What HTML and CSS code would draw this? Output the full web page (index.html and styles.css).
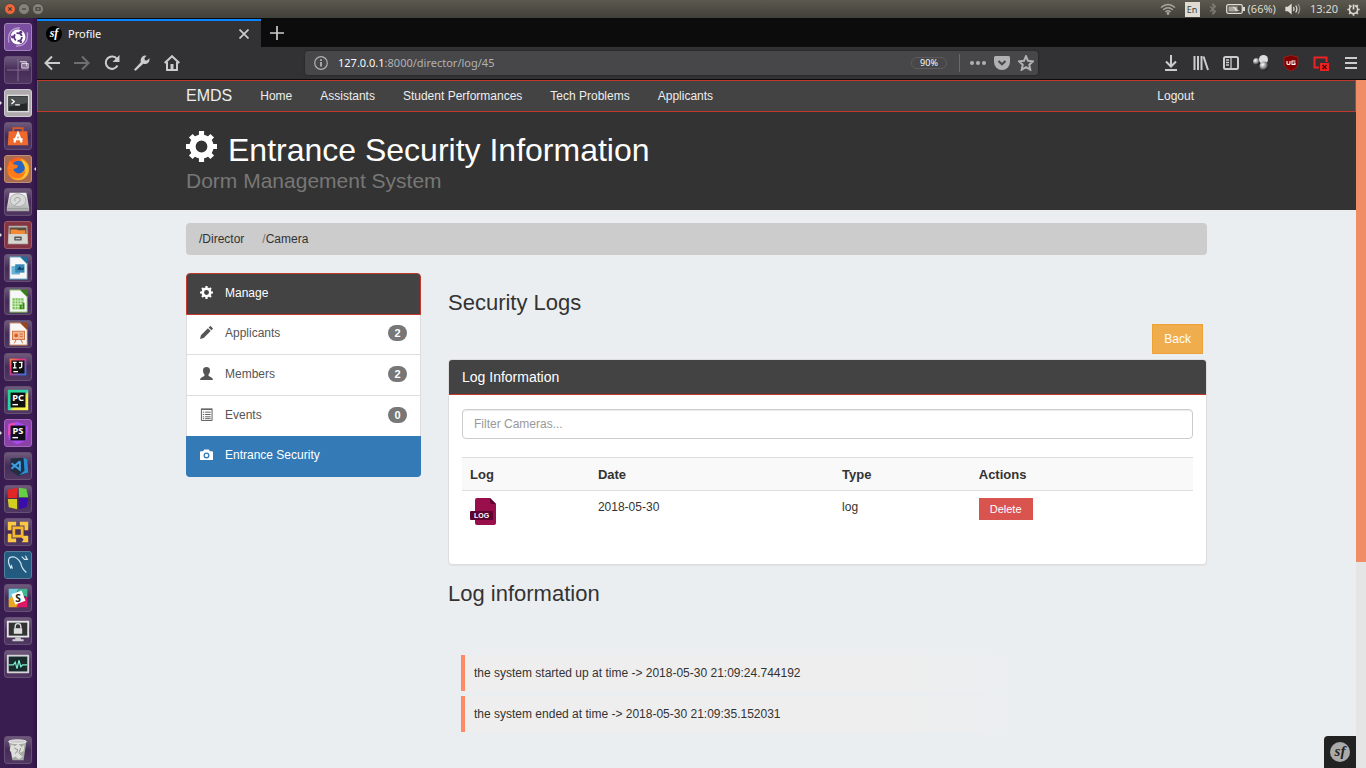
FILE: index.html
```html
<!DOCTYPE html>
<html lang="en">
<head>
<meta charset="utf-8">
<meta name="viewport" content="width=device-width, initial-scale=1">
<title>Profile</title>
<link rel="stylesheet" href="styles.css">
</head>
<body>
<svg class="defs" aria-hidden="true">
  <defs>
    <linearGradient id="steel" x1="0" y1="0" x2="0" y2="1"><stop offset="0" stop-color="#f4f4f4"/><stop offset="1" stop-color="#a9a9a9"/></linearGradient>
    <linearGradient id="fox" x1="0" y1="0" x2="1" y2="1"><stop offset="0" stop-color="#ff3d1f"/><stop offset=".5" stop-color="#ff8a16"/><stop offset="1" stop-color="#ffd43a"/></linearGradient>
    <linearGradient id="rainbow" x1="0" y1="0" x2="1" y2="1"><stop offset="0" stop-color="#fc8a3a"/><stop offset=".35" stop-color="#f0317a"/><stop offset="1" stop-color="#1a7df0"/></linearGradient>
    <linearGradient id="pycharm" x1="0" y1="0" x2="1" y2="1"><stop offset="0" stop-color="#21d789"/><stop offset=".5" stop-color="#2fd3b0"/><stop offset=".6" stop-color="#f5ec4b"/><stop offset="1" stop-color="#fcf84a"/></linearGradient>
    <radialGradient id="ball" cx=".35" cy=".35" r=".7"><stop offset="0" stop-color="#fff"/><stop offset=".5" stop-color="#999"/><stop offset="1" stop-color="#111"/></radialGradient>
    <symbol id="gear" viewBox="0 0 30 30">
      <circle cx="15" cy="15" r="8.700" fill="none" stroke="currentColor" stroke-width="6"/>
      <path fill="none" stroke="currentColor" stroke-width="5" d="M15 0v5M15 25v5M0 15h5M25 15h5M4.600 4.600l3.500 3.500M21.900 21.900l3.500 3.500M25.400 4.600l-3.500 3.500M8.100 21.900l-3.500 3.500"/>
    </symbol>
  </defs>
</svg>

<header class="menubar">
  <div class="window-buttons">
    <button class="win close" aria-label="Close window"><svg viewBox="0 0 12 12"><path d="M4 4l4 4M8 4l-4 4"/></svg></button>
    <button class="win" aria-label="Minimise"><svg viewBox="0 0 12 12"><path d="M3.500 6h5"/></svg></button>
    <button class="win" aria-label="Maximise"><svg viewBox="0 0 12 12"><path d="M3.500 4.500h5v3h-5z"/></svg></button>
  </div>
  <div class="indicators">
    <svg width="16" height="12" viewBox="0 0 16 12" fill="none" stroke="#aaa89f" stroke-width="1.400"><path d="M1 4.500Q8-1.500 15 4.500M3.200 6.800Q8 2.600 12.800 6.800M5.400 9Q8 6.600 10.600 9"/><circle cx="8" cy="10.500" r=".7"/></svg>
    <span class="keyboard">En</span>
    <svg width="8" height="12" viewBox="0 0 8 12" fill="none" stroke="#7e7c73" stroke-width="1.200"><path d="M1 3.500l5.500 5L4 11V1l2.500 2.500L1 8.500"/></svg>
    <span class="battery">
      <svg width="19" height="10" viewBox="0 0 19 10"><rect x=".7" y=".7" width="15.600" height="8.600" rx="1.500" fill="none" stroke="#dfdbd2" stroke-width="1.300"/><rect x="2.500" y="2.500" width="9" height="5" fill="#aaa89f"/><rect x="17" y="3" width="2" height="4" fill="#dfdbd2"/><path d="M6 2.500l4 1.500-.5 1L14 7 9 6.300l.5-1z" fill="#fff"/></svg>
      (66%)
    </span>
    <svg width="16" height="12" viewBox="0 0 16 12" fill="none" stroke="#dfdbd2" stroke-width="1.300"><path fill="#dfdbd2" d="M1 4.500h2l3-2.500v8L3 7.500H1z"/><path d="M8.500 4q1.200 2 0 4M10.700 2.500q2.400 3.500 0 7"/><path stroke="#96948b" d="M13 1q3.400 5 0 10"/></svg>
    <span>13:20</span>
    <svg width="13" height="13" viewBox="0 0 14 14" fill="none" stroke="#dfdbd2"><circle cx="7" cy="7" r="4.400" stroke-width="1.700" stroke-dasharray="23.600 4" transform="rotate(-72 7 7)"/><path stroke-width="1.800" d="M7 1.500V7M.3 7h1.700M12 7h1.700M7 12v1.700M2.300 2.300l1.300 1.300M11.700 2.300l-1.300 1.300M2.300 11.700l1.300-1.300M11.700 11.700l-1.300-1.300"/></svg>
  </div>
</header>

<div class="desktop">
  <nav class="launcher" aria-label="Launcher">
    <button class="tile t-dash" aria-label="Dash"><svg viewBox="0 0 28 28"><path d="M4 20Q2 5 16 4M24 9q2 14-12 15" fill="none" stroke="#b898d2" stroke-width="1.500"/><circle cx="14" cy="14" r="8" fill="#fff"/><circle cx="14" cy="14" r="4.200" fill="none" stroke="#5a3380" stroke-width="2" stroke-dasharray="7 1.800"/><g fill="#5a3380"><circle cx="8" cy="14" r="1.500"/><circle cx="17" cy="8.800" r="1.500"/><circle cx="17" cy="19.200" r="1.500"/></g></svg></button>
    <button class="tile" aria-label="Workspaces"><svg viewBox="0 0 28 28"><path d="M14 2v24M2 14h24" stroke="#8b7494"/><path d="M16 5h7v5M18 7h7v5h-7z" fill="#8b7494" stroke="#ded5e2"/></svg></button>
    <button class="tile t-light running" aria-label="Terminal"><svg viewBox="0 0 28 28"><rect x="2" y="5" width="24" height="19" fill="#ddd"/><rect x="3.500" y="6.500" width="21" height="16" fill="#242828"/><path d="M4 7h20v7L4 18z" fill="#4b4f4f"/><path d="M7 10l3 2.500L7 15M11 16h5" fill="none" stroke="#fff" stroke-width="1.400"/></svg></button>
    <button class="tile" aria-label="Software"><svg viewBox="0 0 28 28"><path d="M9 9V5.500h10V9" fill="none" stroke="#d95d22" stroke-width="2"/><path d="M4 9h20l1 15H3z" fill="#f0692c"/><path d="M10 21l4-10 4 10M9 17.500h10" fill="none" stroke="#fff" stroke-width="2.200"/></svg></button>
    <button class="tile t-fox running active" aria-label="Firefox"><svg viewBox="0 0 28 28"><circle cx="14" cy="14" r="12" fill="url(#fox)"/><circle cx="14.500" cy="12" r="7" fill="#2766c4"/><path d="M5 5l4 4 5 1-1 3-4 1q2 6 8 5 5-1 5-7 3 10-7 12Q4 24 3 13z" fill="#ff7a1c"/><path d="M17 3q9 4 8 13-2 7-8 8 7-5 4-13z" fill="#ffc52e"/></svg></button>
    <button class="tile" aria-label="Disk"><svg viewBox="0 0 28 28"><path d="M5 4h18l3 16v4H2v-4z" fill="url(#steel)"/><ellipse cx="14" cy="12" rx="8.500" ry="7" fill="#d9d9d9" stroke="#aaa"/><path d="M11 13a3 2.500 0 1 1 5 0l-6 5M3 21h22" fill="none" stroke="#999"/></svg></button>
    <button class="tile t-files running" aria-label="Files"><svg viewBox="0 0 28 28"><path d="M4 4h20l1 20H3z" fill="#b3b1ac"/><path d="M5 6h18v7H5z" fill="#5a4a40"/><path d="M6 8h7l1 1h8v4H6z" fill="#f58a34"/><path d="M4 13h20v10H4z" fill="#d8d6d1"/><rect x="10" y="15.500" width="8" height="4.500" rx="1" fill="#555"/><path d="M11.500 18h5" stroke="#eee"/></svg></button>
    <button class="tile" aria-label="Writer"><svg viewBox="0 0 28 28"><path d="M5 2h12l7 7v17H5z" fill="#f7f7f7" stroke="#3b87b0"/><path d="M16 2h8v8z" fill="#1e6f9c"/><path d="M7 12h9v9H7z" fill="#69b2d6"/><path d="M11 10h10v9H11z" fill="#3388b8"/><path d="M13 16l3-4 2 3 2-2v3z" fill="#0c3f5c"/></svg></button>
    <button class="tile" aria-label="Calc"><svg viewBox="0 0 28 28"><path d="M5 2h12l7 7v17H5z" fill="#f7f7f7" stroke="#5aa33a"/><path d="M16 2h8v8z" fill="#39801b"/><path d="M8 11h12v12H8z" fill="#7cc35a"/><path d="M8 14h12M8 17h12M8 20h12M11 11v12M14 11v12M17 11v12" stroke="#e5f5dd" stroke-width=".8"/><path d="M16 18h2v5h-2zM19 16h2v7h-2z" fill="#378b12"/></svg></button>
    <button class="tile" aria-label="Impress"><svg viewBox="0 0 28 28"><path d="M5 2h12l7 7v17H5z" fill="#f7f7f7" stroke="#b8663a"/><path d="M16 2h8v8z" fill="#97471b"/><rect x="8" y="11" width="13" height="9" fill="#f3b593" stroke="#d16f3a"/><circle cx="12" cy="15.500" r="2" fill="#cf6127"/><path d="M16 14h3M16 16.500h3M12 20l-2 4M17 20l2 4" stroke="#cf6127"/></svg></button>
    <button class="tile" aria-label="IntelliJ IDEA"><svg viewBox="0 0 28 28"><rect x="5" y="5" width="18" height="18" fill="url(#rainbow)"/><rect x="7" y="7" width="14" height="14" fill="#101010"/><path d="M8.500 9h4M10.500 9v6M8.500 15h4M15 9h4M18 9v4.500q0 1.500-3 1.500M9 19h5" fill="none" stroke="#fff" stroke-width="1.400"/></svg></button>
    <button class="tile" aria-label="PyCharm"><svg viewBox="0 0 28 28"><rect x="3" y="3" width="22" height="22" fill="url(#pycharm)"/><rect x="6" y="6" width="16" height="16" fill="#101010"/><text x="14" y="15" class="tile-text">PC</text><path d="M8 19h6" stroke="#fff" stroke-width="1.500"/></svg></button>
    <button class="tile t-storm running" aria-label="PhpStorm"><svg viewBox="0 0 28 28"><path d="M3 5l10-3 12 5-2 15-10 4-9-5z" fill="#a94cf0"/><path d="M4 4l7-1-3 11-5 3z" fill="#f04ab4"/><rect x="6" y="6" width="16" height="16" fill="#120d1c"/><text x="14" y="15" class="tile-text">PS</text><path d="M8 19h6" stroke="#fff" stroke-width="1.500"/></svg></button>
    <button class="tile" aria-label="Code"><svg viewBox="0 0 28 28"><path d="M6 6l13-1 5 3 1 13-10 4-9-6z" fill="#222f42"/><path d="M20 5l4 2 1 14-10 3 6-5z" fill="#298fd5"/><path d="M16 9v9l-9-7M16 9l-9 8" fill="none" stroke="#3aa0e8" stroke-width="2.200"/></svg></button>
    <button class="tile" aria-label="Puzzle"><svg viewBox="0 0 28 28"><path d="M3 4l10-2v11H3z" fill="#df2727"/><path d="M15 2l8 1 2 9H15z" fill="#65cf43"/><path d="M3 14h10v11l-9-2z" fill="#d3cf20"/><path d="M15 13h10l-2 10-8 2z" fill="#3a0cae"/></svg></button>
    <button class="tile" aria-label="VMware"><svg viewBox="0 0 28 28"><path d="M3 3h9v4H7v5H3zM16 3h9v9h-4V7h-5zM3 16h4v5h5v4H3zM18 18h7v7h-7l2-3-3-3z" fill="#f9c944"/><rect x="9.500" y="9.500" width="9" height="9" fill="#4a3354" stroke="#f4b72d" stroke-width="3"/></svg></button>
    <button class="tile t-mysql" aria-label="MySQL Workbench"><svg viewBox="0 0 28 28"><path d="M8 18l-1-3-1 2Q2 9 5 6q7-3 12 6 1 6 6 10M18 5l3 3 3 0-2-4" fill="none" stroke="#cfe5ef" stroke-width="1.300"/></svg></button>
    <button class="tile" aria-label="Slack"><svg viewBox="0 0 28 28"><path d="M4 4h11l-6 9-5 3z" fill="#70cadb"/><path d="M15 4h9v9l-11-4z" fill="#3eb991"/><path d="M4 15l6-4 5 13H4z" fill="#e9a820"/><path d="M24 12v12H12l3-5z" fill="#e01765"/><path d="M7 10l11-4 4 11-11 4z" fill="#fff"/><text x="14" y="18" class="tile-text dark">S</text></svg></button>
    <button class="tile" aria-label="Lock screen"><svg viewBox="0 0 28 28"><rect x="2" y="3" width="24" height="18" fill="#e6e6e6"/><rect x="4" y="5" width="20" height="14" fill="#333"/><path d="M11 11V9a3 3 0 0 1 6 0v2" fill="none" stroke="#ddd" stroke-width="1.500"/><rect x="9.500" y="11" width="9" height="6" fill="#ddd"/><path d="M11 21h6v2h3v2H8v-2h3z" fill="#ccc"/></svg></button>
    <button class="tile" aria-label="System monitor"><svg viewBox="0 0 28 28"><rect x="2" y="4" width="24" height="20" rx="1" fill="#d5d5d5"/><rect x="4" y="6" width="20" height="16" fill="#182b2c"/><path d="M4 15h5l2-3 2 7 2-9 2 7 2-2h5" fill="none" stroke="#7df0cf" stroke-width="1.300"/></svg></button>
    <button class="tile trash" aria-label="Trash"><svg viewBox="0 0 28 28"><path d="M4 5h19l-3 20H8z" fill="#a7aaa4"/><path d="M7 8l4 2 3-3 4 4 3-3-1 7-4 2 3 4-4 3-4-3-3 2-1-6-2-3z" fill="#dedfda"/><path d="M10 12l4 2-3 4M17 12l-2 5 3 3" fill="none" stroke="#888" /><ellipse cx="13.500" cy="5" rx="9.500" ry="2" fill="#ccc" stroke="#eee"/></svg></button>
  </nav>

  <div class="browser">
    <div class="tabs">
      <div class="tab">
        <svg class="sf" width="16" height="16" viewBox="0 0 20 20"><circle cx="10" cy="10" r="10" fill="#000"/><text x="10" y="14" fill="#fff">sf</text></svg>
        <span>Profile</span>
        <button class="plain tab-close" aria-label="Close tab"><svg width="10" height="10" viewBox="0 0 10 10"><path d="M.5.5l9 9M9.500.5l-9 9"/></svg></button>
      </div>
      <button class="plain new-tab" aria-label="New tab"><svg width="14" height="14" viewBox="0 0 14 14"><path d="M7 0v14M0 7h14"/></svg></button>
    </div>
    <div class="toolbar">
      <div class="tools">
        <button class="plain" aria-label="Back"><svg viewBox="0 0 16 16"><path d="M16 8H1M8 1.500L1.500 8 8 14.500"/></svg></button>
        <button class="plain dim" aria-label="Forward"><svg viewBox="0 0 16 16"><path d="M0 8h15M8 1.500L14.500 8 8 14.500"/></svg></button>
        <button class="plain" aria-label="Reload"><svg viewBox="0 0 16 16"><path d="M13.500 10.500A6.200 6.200 0 1 1 13 4"/><path d="M15.500 0v7h-7z" fill="#ccc" stroke="none"/></svg></button>
        <button class="plain" aria-label="Developer tools"><svg viewBox="0 0 16 16"><path fill="#ccc" stroke="none" d="M0 14.500L6.800 7.200Q6 3.500 8.500 1.500 10.500 0 12.500.8L10.500 3l.3 2.200 2.200.3 2.300-2.200q.8 2.500-1 4.400-2 1.800-5 1L2 15.500q-1.200.6-2-1z"/></svg></button>
        <button class="plain" aria-label="Home"><svg viewBox="0 0 16 16"><path d="M.7 8L8 1.200 15.300 8M3 7v8h10V7"/><path d="M6.500 9h3v6h-3z" fill="#ccc" stroke="none"/></svg></button>
      </div>
      <div class="address">
        <svg width="14" height="14" viewBox="0 0 14 14" fill="none" stroke="#b1b1b3"><circle cx="7" cy="7" r="6.300" stroke-width="1.200"/><path stroke-width="1.800" d="M7 6v4.500M7 3.200V5"/></svg>
        <span class="url"><b>127.0.0.1</b>:8000/director/log/45</span>
        <button class="plain zoom">90%</button>
        <span class="rule"></span>
        <button class="plain" aria-label="Page actions"><svg viewBox="0 0 16 16"><g fill="#b1b1b3" stroke="none"><circle cx="2" cy="8" r="2"/><circle cx="8" cy="8" r="2"/><circle cx="14" cy="8" r="2"/></g></svg></button>
        <button class="plain" aria-label="Pocket"><svg viewBox="0 0 16 16"><path d="M1.500 1h13Q16 1 16 2.500V7a8 8 0 0 1-16 0V2.500Q0 1 1.500 1z" fill="#b1b1b3" stroke="none"/><path d="M4.500 6L8 9.300 11.500 6" stroke="#474749"/></svg></button>
        <button class="plain" aria-label="Bookmark"><svg viewBox="0 0 16 16"><path d="M8 1.200l2 4.600 5 .5-3.700 3.400 1 5L8 12.200l-4.300 2.500 1-5L1 6.300l5-.5z"/></svg></button>
      </div>
      <div class="tools">
        <button class="plain" aria-label="Downloads"><svg viewBox="0 0 16 16"><path d="M8 0v11M3 6.500L8 11.500l5-5M2 15h12"/></svg></button>
        <button class="plain" aria-label="Library"><svg viewBox="0 0 16 16"><path d="M1.500 1v14M5 1v14M8.500 1v14M10.500 1.500L15 15"/></svg></button>
        <button class="plain" aria-label="Sidebars"><svg viewBox="0 0 16 16"><rect x="1" y="2" width="14" height="12" rx="1.500"/><path d="M8 2v12M3 5h3M3 7.500h3M3 10h3" stroke-width="1.300"/></svg></button>
        <button class="plain" aria-label="Extension"><svg viewBox="0 0 16 16"><g stroke="none" fill="url(#ball)"><circle cx="3.500" cy="6.500" r="3.500"/><circle cx="10.500" cy="4.500" r="4.500" fill="#ddd"/><circle cx="11" cy="11" r="4.500"/></g></svg></button>
        <button class="plain" aria-label="uBlock Origin"><svg viewBox="0 0 16 16"><path d="M8 0q3 2 7 2v6q0 5-7 8-7-3-7-8V2q4 0 7-2z" fill="#800000" stroke="#a52626" stroke-width=".7"/><path d="M4 6v2.500q0 1 1.500 1T7 8.500V6M12.500 6H9v3.500h3V8h-1.500" stroke="#fff" stroke-width="1.100"/></svg></button>
        <button class="plain" aria-label="Window closer"><svg viewBox="0 0 16 16"><path d="M6 12.500H1.500v-10h12V7" stroke="#ee2222"/><path d="M7 8h9v8H7z" fill="#ee2222" stroke="none"/><path d="M9.500 10l4 4M13.500 10l-4 4" stroke="#500" stroke-width="1.500"/></svg></button>
        <button class="plain" aria-label="Menu"><svg viewBox="0 0 16 16"><path d="M2 3h12M2 8h12M2 13h12"/></svg></button>
      </div>
    </div>

    <div class="viewport">
      <div class="page">
        <nav class="navbar">
          <div class="container nav-row">
            <a class="brand" href="#">EMDS</a>
            <a href="#">Home</a>
            <a href="#">Assistants</a>
            <a href="#">Student Performances</a>
            <a href="#">Tech Problems</a>
            <a href="#">Applicants</a>
            <a class="logout" href="#">Logout</a>
          </div>
        </nav>
        <header class="hero">
          <div class="container">
            <h1><svg class="hero-gear"><use href="#gear"/></svg> Entrance Security Information</h1>
            <p>Dorm Management System</p>
          </div>
        </header>
        <div class="container">
          <nav class="breadcrumb" aria-label="Breadcrumb">
            <a href="#">/Director</a>
            <span><i>/</i><a href="#">Camera</a></span>
          </nav>
          <div class="columns">
            <nav class="side" aria-label="Manage">
              <a class="head" href="#"><svg viewBox="0 0 30 30"><use href="#gear"/></svg>Manage</a>
              <a href="#"><svg viewBox="0 0 14 14"><path fill="currentColor" d="M0 14l1-4L8.500 2.500l3 3L4 13zM9.300 1.700l1.400-1.400q.5-.5 1 0l2 2q.5.5 0 1l-1.400 1.400z"/></svg>Applicants<span class="badge">2</span></a>
              <a href="#"><svg viewBox="0 0 14 14"><path fill="currentColor" d="M7 0q3.800 0 3.800 3.800 0 3-1.600 4.200v1.400q0 .6 2.300 1.300Q14 11.500 14 14H0q0-2.500 2.500-3.300 2.300-.7 2.300-1.300V8Q3.200 6.800 3.200 3.800 3.200 0 7 0z"/></svg>Members<span class="badge">2</span></a>
              <a href="#"><svg viewBox="0 0 14 14"><path fill="none" stroke="currentColor" d="M1.500 1.500h11.500v12H1.500zM1 1h12.500M3 4.500h1.500M3 7h1.500M3 9.500h1.500M3 11.500h1.500M5.500 4.500h6M5.500 7h6M5.500 9.500h6M5.500 11.500h6"/></svg>Events<span class="badge">0</span></a>
              <a class="current" href="#"><svg viewBox="0 0 14 14"><path fill="currentColor" fill-rule="evenodd" d="M4.500 1.500h5l1.200 2H13q1 0 1 1V12q0 1-1 1H1q-1 0-1-1V4.500q0-1 1-1h2.300zM7 4.800a3.200 3.200 0 1 0 0 6.400 3.200 3.200 0 1 0 0-6.400zM7 6.200a1.800 1.800 0 1 1 0 3.600 1.800 1.800 0 1 1 0-3.600z"/></svg>Entrance Security</a>
            </nav>
            <main>
              <h3>Security Logs</h3>
              <div class="actions"><button class="btn warning">Back</button></div>
              <section class="panel">
                <h4>Log Information</h4>
                <div class="panel-body">
                  <input type="text" aria-label="Filter Cameras" placeholder="Filter Cameras...">
                  <table>
                    <thead><tr><th class="c-log">Log</th><th class="c-date">Date</th><th class="c-type">Type</th><th>Actions</th></tr></thead>
                    <tbody><tr>
                      <td><svg class="log-icon" width="26" height="27" viewBox="0 0 26 27"><path d="M7 0h13l6 6v19q0 2-2 2H7q-2 0-2-2V2q0-2 2-2z" fill="#990f4b"/><path d="M20 0l6 6h-4q-2 0-2-2z" fill="#5e0330"/><rect y="13" width="23" height="9" rx="1" fill="#5e0330"/><text x="11.500" y="20">LOG</text></svg></td>
                      <td>2018-05-30</td>
                      <td>log</td>
                      <td><button class="btn danger">Delete</button></td>
                    </tr></tbody>
                  </table>
                </div>
              </section>
              <h3 class="second">Log information</h3>
              <ul class="log">
                <li>the system started up at time -&gt; 2018-05-30 21:09:24.744192</li>
                <li>the system ended at time -&gt; 2018-05-30 21:09:35.152031</li>
              </ul>
            </main>
          </div>
        </div>
        <button class="plain debug" aria-label="Symfony toolbar"><svg class="sf" width="20" height="20" viewBox="0 0 20 20"><circle cx="10" cy="10" r="10" fill="#aaa"/><text x="10" y="14" fill="#222">sf</text></svg></button>
      </div>
      <div class="scrollbar"><div class="thumb"></div></div>
    </div>
  </div>
</div>
</body>
</html>
```

FILE: styles.css
```css
* { box-sizing: border-box; }
body {
  margin: 0;
  height: 100vh;
  display: flex;
  flex-direction: column;
  overflow: hidden;
  font: 12px/18px "Liberation Sans", Arial, sans-serif;
  color: #333;
}
a { color: inherit; text-decoration: none; }
svg { display: block; flex: none; }
.defs { position: absolute; width: 0; height: 0; }
button { font: inherit; cursor: pointer; }
.plain { border: 0; background: none; padding: 0; color: inherit; display: block; }

/* System bar */
.menubar {
  height: 18px;
  flex: none;
  display: flex;
  align-items: center;
  justify-content: space-between;
  padding: 0 6px 0 4px;
  background: linear-gradient(#5b594f, #41403a);
  color: #dfdbd2;
  font: 11px/18px "Noto Sans", sans-serif;
}
.window-buttons { display: flex; gap: 2px; }
.win { width: 12px; height: 12px; padding: 0; border: 1px solid #4a4942; border-radius: 50%; background: #85837a; }
.win svg { width: 10px; height: 10px; fill: none; stroke: #3d3c36; stroke-width: 1.3; }
.win.close { background: #f0653a; }
.indicators { display: flex; align-items: center; gap: 9px; }
.keyboard { background: #dfdbd2; color: #3c3b37; font-size: 9px; line-height: 15px; width: 15px; text-align: center; }
.battery { display: flex; align-items: center; gap: 3px; }

/* Launcher */
.desktop { flex: 1; min-height: 0; display: flex; }
.launcher {
  width: 37px;
  flex: none;
  display: flex;
  flex-direction: column;
  gap: 5px;
  padding: 5px 5px 4px 4px;
  background: linear-gradient(90deg, #3a1d50 85%, #2f1345);
}
.tile {
  position: relative;
  width: 28px;
  height: 28px;
  flex: none;
  padding: 0;
  border: 1px solid #665073;
  border-radius: 3px;
  background: linear-gradient(#6f5a7c, #452b58 50%, #513863);
}
.tile svg { width: 26px; height: 26px; }
.t-dash { background: #7b4fa0; border-color: #a384bd; }
.t-light { background: #aeaaae; border-color: #cfcbd0; }
.t-fox { background: #a96c50; border-color: #c08f79; }
.t-files { background: #843442; border-color: #a05c68; }
.t-storm { background: #8a41a8; border-color: #a566bd; }
.t-mysql { background: #235b80; border-color: #557f9b; }
.trash { margin-top: auto; }
.running::before, .active::after {
  content: "";
  position: absolute;
  top: 11px;
  left: -5px;
  border: 2px solid transparent;
  border-left-color: #ddd;
}
.active::after { left: auto; right: -5px; border-color: transparent #ddd transparent transparent; }
.tile-text { font: bold 10px "Noto Sans", sans-serif; fill: #fff; text-anchor: middle; }
.tile-text.dark { fill: #222; font-size: 11px; }

/* Browser */
.browser { flex: 1; min-width: 0; display: flex; flex-direction: column; }
.tabs { height: 29px; flex: none; display: flex; background: #0c0c0d; padding-top: 1px; }
.tab {
  width: 224px;
  display: flex;
  align-items: center;
  gap: 6px;
  padding: 0 12px 0 9px;
  border-top: 2px solid #0a84ff;
  background: #323234;
  color: #f9f9fa;
  font: 11px/18px "Noto Sans", sans-serif;
}
.tab-close { margin-left: auto; }
.tabs path { fill: none; stroke: #ccc; stroke-width: 1.7; }
.new-tab { padding: 0 9px; }
.sf text { font: italic bold 15px "Liberation Serif", serif; text-anchor: middle; }
.toolbar {
  height: 33px;
  flex: none;
  display: flex;
  align-items: center;
  gap: 125px;
  padding: 0 7px;
  background: #323234;
  border-bottom: 1px solid #0c0c0d;
}
.tools { display: flex; gap: 14px; }
.toolbar button svg { width: 16px; height: 16px; fill: none; stroke: #ccc; stroke-width: 2; }
.toolbar .dim { opacity: .4; }
.address {
  flex: 1;
  height: 24px;
  display: flex;
  align-items: center;
  gap: 8px;
  padding: 0 4px 0 9px;
  border-radius: 3px;
  background: #474749;
  box-shadow: 0 0 2px #1c1c1e;
}
.address button svg { stroke: #b1b1b3; }
.url { flex: 1; padding-left: 2px; color: #b1b1b3; font: 11px/16px "Noto Sans", sans-serif; }
.url b { color: #f9f9fa; font-weight: 400; }
.zoom { width: 36px; height: 12px; border: 1px solid #5c5c5f; border-radius: 6px; color: #f9f9fa; font: 9px/10px "Noto Sans", sans-serif; }
.rule { width: 1px; height: 18px; margin: 0 2px 0 4px; background: #69696c; }

/* Page */
.viewport { flex: 1; min-height: 0; display: flex; }
.page { position: relative; flex: 1; min-width: 0; overflow: hidden; background: #ebeef1; }
.scrollbar { width: 10px; flex: none; background: #e5e5e5; }
.thumb { height: 70%; background: #f08d67; }
.container { width: 100%; max-width: 1021px; margin: 0 auto; }
.navbar { border: 1px solid #c0392b; background: #434343; color: #eee; }
.nav-row { display: flex; align-items: center; gap: 28px; height: 30px; padding-bottom: 1px; }
.brand { font-size: 16px; }
.logout { margin-left: auto; margin-right: 13px; }
.hero { background: #333; padding: 19px 0 18px; }
.hero h1 { margin: 0; color: #fff; font-size: 32px; font-weight: 400; line-height: 38px; display: flex; gap: 11px; }
.hero-gear { width: 31px; height: 31px; }
.hero p { margin: 0; color: #777; font-size: 21px; line-height: 23px; }
.breadcrumb { display: flex; gap: 18px; margin: 13px 0 18px; padding: 7px 13px; border-radius: 4px; background: #ccc; }
.breadcrumb i { color: #777; font-style: normal; }
.columns { display: grid; grid-template-columns: 235px 1fr; gap: 27px; align-items: start; }
.side { display: flex; flex-direction: column; color: #555; }
.side a {
  height: 41px;
  display: flex;
  align-items: center;
  gap: 12px;
  padding: 0 13px 3px;
  border: 1px solid #ddd;
  border-top: 0;
  background: #fff;
}
.side svg { width: 13px; height: 13px; }
.side .head { position: relative; height: 42px; margin-bottom: -1px; border: 1px solid #c0392b; border-radius: 4px 4px 0 0; background: #434343; color: #fff; }
.side .current { margin-top: -1px; border-color: #337ab7; border-radius: 0 0 4px 4px; background: #337ab7; color: #fff; }
.badge { margin-left: auto; width: 19px; border-radius: 9px; background: #777; color: #fff; font-size: 11px; font-weight: 700; line-height: 16px; text-align: center; }

h3 { margin: 18px 0 9px; font-size: 22px; font-weight: 400; line-height: 24px; }
.actions { display: flex; justify-content: flex-end; padding-right: 4px; margin-bottom: 5px; }
.btn { border: 1px solid; color: #fff; }
.warning { padding: 5px 11px; background: #f0ad4e; border-color: #eea236; }
.danger { display: block; padding: 2px 10px; background: #d9534f; border-color: #d9534f; font-size: 11px; line-height: 16px; }
.panel { border: 1px solid #ddd; border-radius: 4px; background: #fff; box-shadow: 0 1px 1px rgba(0, 0, 0, .05); }
.panel h4 { margin: 0; padding: 8px 13px; border-bottom: 1px solid #c0392b; border-radius: 3px 3px 0 0; background: #434343; color: #fff; font-size: 14px; font-weight: 400; line-height: 18px; }
.panel-body { padding: 14px 13px 32px; }
.panel input { display: block; width: 100%; height: 30px; padding: 0 11px; border: 1px solid #ccc; border-radius: 4px; background: #fff; color: #555; font: inherit; box-shadow: inset 0 1px 1px rgba(0, 0, 0, .075); }
.panel input::placeholder { color: #999; opacity: 1; }
table { width: 100%; margin-top: 18px; border-collapse: collapse; table-layout: fixed; }
th, td { padding: 7px 8px; text-align: left; vertical-align: top; }
th { padding: 8px 8px 6px; border: solid #ddd; border-width: 1px 0; background: #f9f9f9; font-size: 13px; }
.c-log { width: 17.5%; }
.c-date { width: 33.4%; }
.c-type { width: 18.7%; }
.log-icon text { font: bold 7px "Liberation Sans", sans-serif; fill: #fff; text-anchor: middle; }
.second { margin: 17px 0 49px; }
.log { display: flex; flex-direction: column; gap: 5px; margin: 0 13px; padding: 0; list-style: none; }
.log li { padding: 9px; border-left: 4px solid #ff8a65; background: linear-gradient(90deg, #eee 60%, #ebeef1 75%); }
.debug { position: absolute; right: 0; bottom: 0; padding: 6px; border-radius: 4px 0 0; background: #222; }
```
